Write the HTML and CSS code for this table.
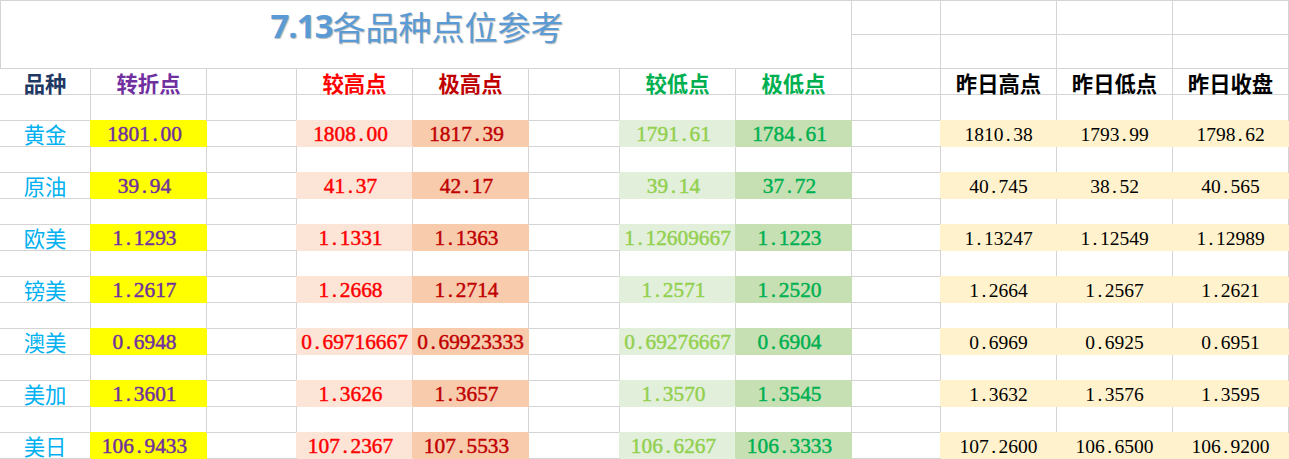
FILE: index.html
```html
<!DOCTYPE html>
<html lang="zh">
<head>
<meta charset="utf-8">
<title>7.13各品种点位参考</title>
<link rel="stylesheet" href="styles.css">
</head>
<body>
<div class="sheet">
  <div class="c title"><span class="t-num">7.13</span><span class="t-cjk">各品种点位参考</span></div>
  <div class="c"></div><div class="c"></div><div class="c"></div><div class="c"></div>
  <div class="c"></div><div class="c"></div><div class="c"></div><div class="c"></div>

  <div class="c h h-navy">品种</div>
  <div class="c h h-purple">转折点</div>
  <div class="c"></div>
  <div class="c h h-red">较高点</div>
  <div class="c h h-dred">极高点</div>
  <div class="c"></div>
  <div class="c h h-green">较低点</div>
  <div class="c h h-green">极低点</div>
  <div class="c"></div>
  <div class="c h h-black">昨日高点</div>
  <div class="c h h-black">昨日低点</div>
  <div class="c h h-black">昨日收盘</div>

  <div class="c"></div><div class="c"></div><div class="c"></div><div class="c"></div><div class="c"></div><div class="c"></div><div class="c"></div><div class="c"></div><div class="c"></div><div class="c"></div><div class="c"></div><div class="c"></div>

  <div class="c lbl">黄金</div>
  <div class="c n f-yel">1801<span class="dot">.</span>00</div>
  <div class="c"></div>
  <div class="c n f-pk1">1808<span class="dot">.</span>00</div>
  <div class="c n f-pk2">1817<span class="dot">.</span>39</div>
  <div class="c"></div>
  <div class="c n f-gr1">1791<span class="dot">.</span>61</div>
  <div class="c n f-gr2">1784<span class="dot">.</span>61</div>
  <div class="c"></div>
  <div class="c y f-cr">1810<span class="dot">.</span>38</div>
  <div class="c y f-cr">1793<span class="dot">.</span>99</div>
  <div class="c y f-cr">1798<span class="dot">.</span>62</div>

  <div class="c"></div><div class="c"></div><div class="c"></div><div class="c"></div><div class="c"></div><div class="c"></div><div class="c"></div><div class="c"></div><div class="c"></div><div class="c"></div><div class="c"></div><div class="c"></div>

  <div class="c lbl">原油</div>
  <div class="c n f-yel">39<span class="dot">.</span>94</div>
  <div class="c"></div>
  <div class="c n f-pk1">41<span class="dot">.</span>37</div>
  <div class="c n f-pk2">42<span class="dot">.</span>17</div>
  <div class="c"></div>
  <div class="c n f-gr1">39<span class="dot">.</span>14</div>
  <div class="c n f-gr2">37<span class="dot">.</span>72</div>
  <div class="c"></div>
  <div class="c y f-cr">40<span class="dot">.</span>745</div>
  <div class="c y f-cr">38<span class="dot">.</span>52</div>
  <div class="c y f-cr">40<span class="dot">.</span>565</div>

  <div class="c"></div><div class="c"></div><div class="c"></div><div class="c"></div><div class="c"></div><div class="c"></div><div class="c"></div><div class="c"></div><div class="c"></div><div class="c"></div><div class="c"></div><div class="c"></div>

  <div class="c lbl">欧美</div>
  <div class="c n f-yel">1<span class="dot">.</span>1293</div>
  <div class="c"></div>
  <div class="c n f-pk1">1<span class="dot">.</span>1331</div>
  <div class="c n f-pk2">1<span class="dot">.</span>1363</div>
  <div class="c"></div>
  <div class="c n long f-gr1">1<span class="dot">.</span>12609667</div>
  <div class="c n f-gr2">1<span class="dot">.</span>1223</div>
  <div class="c"></div>
  <div class="c y f-cr">1<span class="dot">.</span>13247</div>
  <div class="c y f-cr">1<span class="dot">.</span>12549</div>
  <div class="c y f-cr">1<span class="dot">.</span>12989</div>

  <div class="c"></div><div class="c"></div><div class="c"></div><div class="c"></div><div class="c"></div><div class="c"></div><div class="c"></div><div class="c"></div><div class="c"></div><div class="c"></div><div class="c"></div><div class="c"></div>

  <div class="c lbl">镑美</div>
  <div class="c n f-yel">1<span class="dot">.</span>2617</div>
  <div class="c"></div>
  <div class="c n f-pk1">1<span class="dot">.</span>2668</div>
  <div class="c n f-pk2">1<span class="dot">.</span>2714</div>
  <div class="c"></div>
  <div class="c n f-gr1">1<span class="dot">.</span>2571</div>
  <div class="c n f-gr2">1<span class="dot">.</span>2520</div>
  <div class="c"></div>
  <div class="c y f-cr">1<span class="dot">.</span>2664</div>
  <div class="c y f-cr">1<span class="dot">.</span>2567</div>
  <div class="c y f-cr">1<span class="dot">.</span>2621</div>

  <div class="c"></div><div class="c"></div><div class="c"></div><div class="c"></div><div class="c"></div><div class="c"></div><div class="c"></div><div class="c"></div><div class="c"></div><div class="c"></div><div class="c"></div><div class="c"></div>

  <div class="c lbl">澳美</div>
  <div class="c n f-yel">0<span class="dot">.</span>6948</div>
  <div class="c"></div>
  <div class="c n long f-pk1">0<span class="dot">.</span>69716667</div>
  <div class="c n long f-pk2">0<span class="dot">.</span>69923333</div>
  <div class="c"></div>
  <div class="c n long f-gr1">0<span class="dot">.</span>69276667</div>
  <div class="c n f-gr2">0<span class="dot">.</span>6904</div>
  <div class="c"></div>
  <div class="c y f-cr">0<span class="dot">.</span>6969</div>
  <div class="c y f-cr">0<span class="dot">.</span>6925</div>
  <div class="c y f-cr">0<span class="dot">.</span>6951</div>

  <div class="c"></div><div class="c"></div><div class="c"></div><div class="c"></div><div class="c"></div><div class="c"></div><div class="c"></div><div class="c"></div><div class="c"></div><div class="c"></div><div class="c"></div><div class="c"></div>

  <div class="c lbl">美加</div>
  <div class="c n f-yel">1<span class="dot">.</span>3601</div>
  <div class="c"></div>
  <div class="c n f-pk1">1<span class="dot">.</span>3626</div>
  <div class="c n f-pk2">1<span class="dot">.</span>3657</div>
  <div class="c"></div>
  <div class="c n f-gr1">1<span class="dot">.</span>3570</div>
  <div class="c n f-gr2">1<span class="dot">.</span>3545</div>
  <div class="c"></div>
  <div class="c y f-cr">1<span class="dot">.</span>3632</div>
  <div class="c y f-cr">1<span class="dot">.</span>3576</div>
  <div class="c y f-cr">1<span class="dot">.</span>3595</div>

  <div class="c"></div><div class="c"></div><div class="c"></div><div class="c"></div><div class="c"></div><div class="c"></div><div class="c"></div><div class="c"></div><div class="c"></div><div class="c"></div><div class="c"></div><div class="c"></div>

  <div class="c lbl">美日</div>
  <div class="c n f-yel">106<span class="dot">.</span>9433</div>
  <div class="c"></div>
  <div class="c n f-pk1">107<span class="dot">.</span>2367</div>
  <div class="c n f-pk2">107<span class="dot">.</span>5533</div>
  <div class="c"></div>
  <div class="c n f-gr1">106<span class="dot">.</span>6267</div>
  <div class="c n f-gr2">106<span class="dot">.</span>3333</div>
  <div class="c"></div>
  <div class="c y f-cr">107<span class="dot">.</span>2600</div>
  <div class="c y f-cr">106<span class="dot">.</span>6500</div>
  <div class="c y f-cr">106<span class="dot">.</span>9200</div>
</div>
</body>
</html>
```

FILE: styles.css
```css
html, body {
  margin: 0;
  padding: 0;
  background: #ffffff;
}

.sheet {
  display: grid;
  grid-template-columns: 91px 116px 90px 116px 116px 91px 116px 116px 89px 116px 116px 116px;
  grid-template-rows: 34px 34px repeat(15, 26px);
  width: 1289px;
  border-top: 1px solid #d4d4d4;
  font-family: "Noto Sans CJK SC", sans-serif;
}

.c {
  box-sizing: border-box;
  border-right: 1px solid #d4d4d4;
  border-bottom: 1px solid #d4d4d4;
  display: flex;
  align-items: center;
  justify-content: center;
  white-space: nowrap;
  overflow: visible;
  min-width: 0;
}

.title {
  grid-column: 1 / 9;
  grid-row: 1 / 3;
  border-left: 1px solid #d4d4d4;
  align-items: flex-start;
  padding-top: 8px;
  padding-right: 18px;
  color: #5b9bd5;
  line-height: 34px;
  text-shadow: 1px 1px 1px rgba(60, 60, 60, 0.35);
}

.t-num {
  font-family: "Open Sans", "Noto Sans CJK SC", sans-serif;
  font-weight: 700;
  font-size: 33px;
  letter-spacing: -1px;
}

.t-cjk {
  font-family: "Noto Sans CJK SC", sans-serif;
  font-size: 33px;
  font-weight: 400;
}

.h {
  font-size: 21.33px;
  font-weight: 700;
  padding-top: 1px;
}

.h-navy { color: #1f3864; }
.h-purple { color: #7030a0; }
.h-red { color: #ff0000; }
.h-dred { color: #c00000; }
.h-green { color: #00b050; }
.h-black { color: #000000; }

.lbl {
  font-size: 21.33px;
  color: #00b0f0;
  font-weight: 400;
}

.n {
  font-family: "Liberation Serif", "Times New Roman", serif;
  font-size: 21.33px;
  font-weight: 400;
  -webkit-text-stroke: 0.45px currentColor;
  padding-top: 2px;
  padding-right: 8px;
}

.n.long {
  padding-right: 0;
}

.y {
  font-family: "Liberation Serif", "Times New Roman", serif;
  font-size: 19.5px;
  font-weight: 400;
  color: #000000;
  padding-top: 3px;
}

.dot {
  display: inline-block;
  width: 0.5em;
  text-align: center;
}

.f-yel {
  background: #ffff00;
  border-color: transparent;
  box-shadow: -1px -1px 0 #ffff00;
  color: #7030a0;
}

.f-pk1 {
  background: #fce4d6;
  border-color: transparent;
  box-shadow: -1px -1px 0 #fce4d6;
  color: #ff0000;
}

.f-pk2 {
  background: #f8cbad;
  border-color: transparent;
  box-shadow: -1px -1px 0 #f8cbad;
  color: #c00000;
}

.f-gr1 {
  background: #e2efda;
  border-color: transparent;
  box-shadow: -1px -1px 0 #e2efda;
  color: #92d050;
}

.f-gr2 {
  background: #c6e0b4;
  border-color: transparent;
  box-shadow: -1px -1px 0 #c6e0b4;
  color: #00b050;
}

.f-cr {
  background: #fff2cc;
  border-color: transparent;
  box-shadow: -1px -1px 0 #fff2cc;
}
```
